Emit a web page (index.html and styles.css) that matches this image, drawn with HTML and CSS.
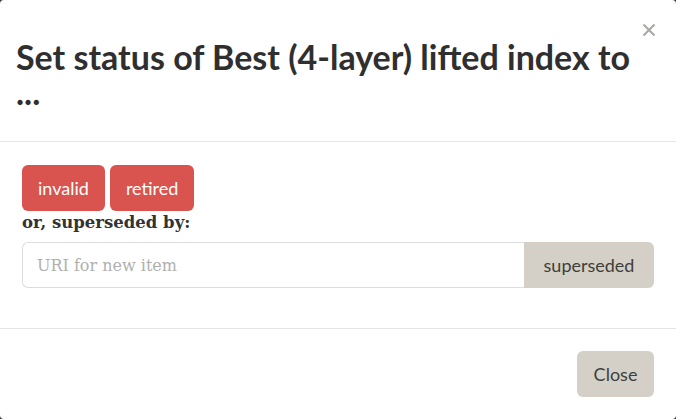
FILE: index.html
```html
<!DOCTYPE html>
<html>
<head>
<meta charset="utf-8">
<link rel="stylesheet" href="styles.css">
</head>
<body>
<div class="modal">
  <div class="modal-header">
    <button class="close" aria-label="Close">
      <svg width="14" height="14" viewBox="0 0 14 14"><path d="M1.5 1.5L12.5 12.5M12.5 1.5L1.5 12.5" stroke="#aaa7a3" stroke-width="2" fill="none"/></svg>
    </button>
    <h2 class="title">Set status of Best (4-layer) lifted index to ...</h2>
  </div>
  <div class="modal-body">
    <div class="btn-row">
      <button class="btn btn-danger">invalid</button>
      <button class="btn btn-danger">retired</button>
    </div>
    <div class="label">or, superseded by:</div>
    <div class="input-group">
      <input class="input" type="text" placeholder="URI for new item">
      <button class="btn btn-default addon">superseded</button>
    </div>
  </div>
  <div class="modal-footer">
    <button class="btn btn-default">Close</button>
  </div>
</div>
</body>
</html>
```
FILE: styles.css
```css
html, body {
  margin: 0;
  padding: 0;
  height: 100%;
  background: #3a3a3a;
}
.modal {
  box-sizing: border-box;
  height: 419px;
  width: 676px;
  background: #fff;
  border-radius: 4px;
  display: flex;
  flex-direction: column;
  font-family: "Lato", "Open Sans", sans-serif;
  color: #333;
}
.modal-header {
  position: relative;
  padding: 39px 16px 0 16px;
  height: 142px;
  box-sizing: border-box;
  border-bottom: 1px solid #e5e5e5;
}
.close {
  position: absolute;
  top: 23px;
  right: 20px;
  background: none;
  border: 0;
  padding: 0;
  width: 14px;
  height: 14px;
  display: flex;
}
.title {
  margin: 0;
  font-size: 34px;
  line-height: 35px;
  font-weight: 700;
  color: #2f2f2f;
  padding-right: 10px;
}
.modal-body {
  padding: 23px 22px 0 22px;
  height: 187px;
  box-sizing: border-box;
  border-bottom: 1px solid #e5e5e5;
}
.btn-row {
  display: flex;
  gap: 5px;
}
.btn {
  font-family: "Lato", "Open Sans", sans-serif;
  font-size: 18px;
  line-height: 24px;
  padding: 10px 16px;
  height: 46px;
  border: 0;
  border-radius: 6px;
  box-sizing: border-box;
}
.btn-danger {
  background: #d9534f;
  color: #fff;
}
.btn-default {
  background: #d4d0c8;
  color: #3e3f3a;
}
.label {
  font-family: "DejaVu Serif", serif;
  font-weight: 700;
  font-size: 16.5px;
  line-height: 22px;
  margin-top: 1px;
  color: #333;
  height: 30px;
}
.input-group {
  display: flex;
  height: 46px;
}
.input {
  flex: 1;
  box-sizing: border-box;
  height: 46px;
  border: 1px solid #ddd;
  border-right: 0;
  border-radius: 6px 0 0 6px;
  padding: 0 14px;
  font-family: "DejaVu Serif", serif;
  font-size: 16px;
  color: #333;
  outline: none;
}
.input::placeholder {
  color: #b0b0b0;
}
.addon {
  width: 130px;
  border-radius: 0 6px 6px 0;
}
.modal-footer {
  flex: 1;
  display: flex;
  justify-content: flex-end;
  align-items: flex-start;
  padding: 22px 22px 0 22px;
}
.modal-footer .btn {
  width: 77px;
  padding: 10px 0;
}
```
